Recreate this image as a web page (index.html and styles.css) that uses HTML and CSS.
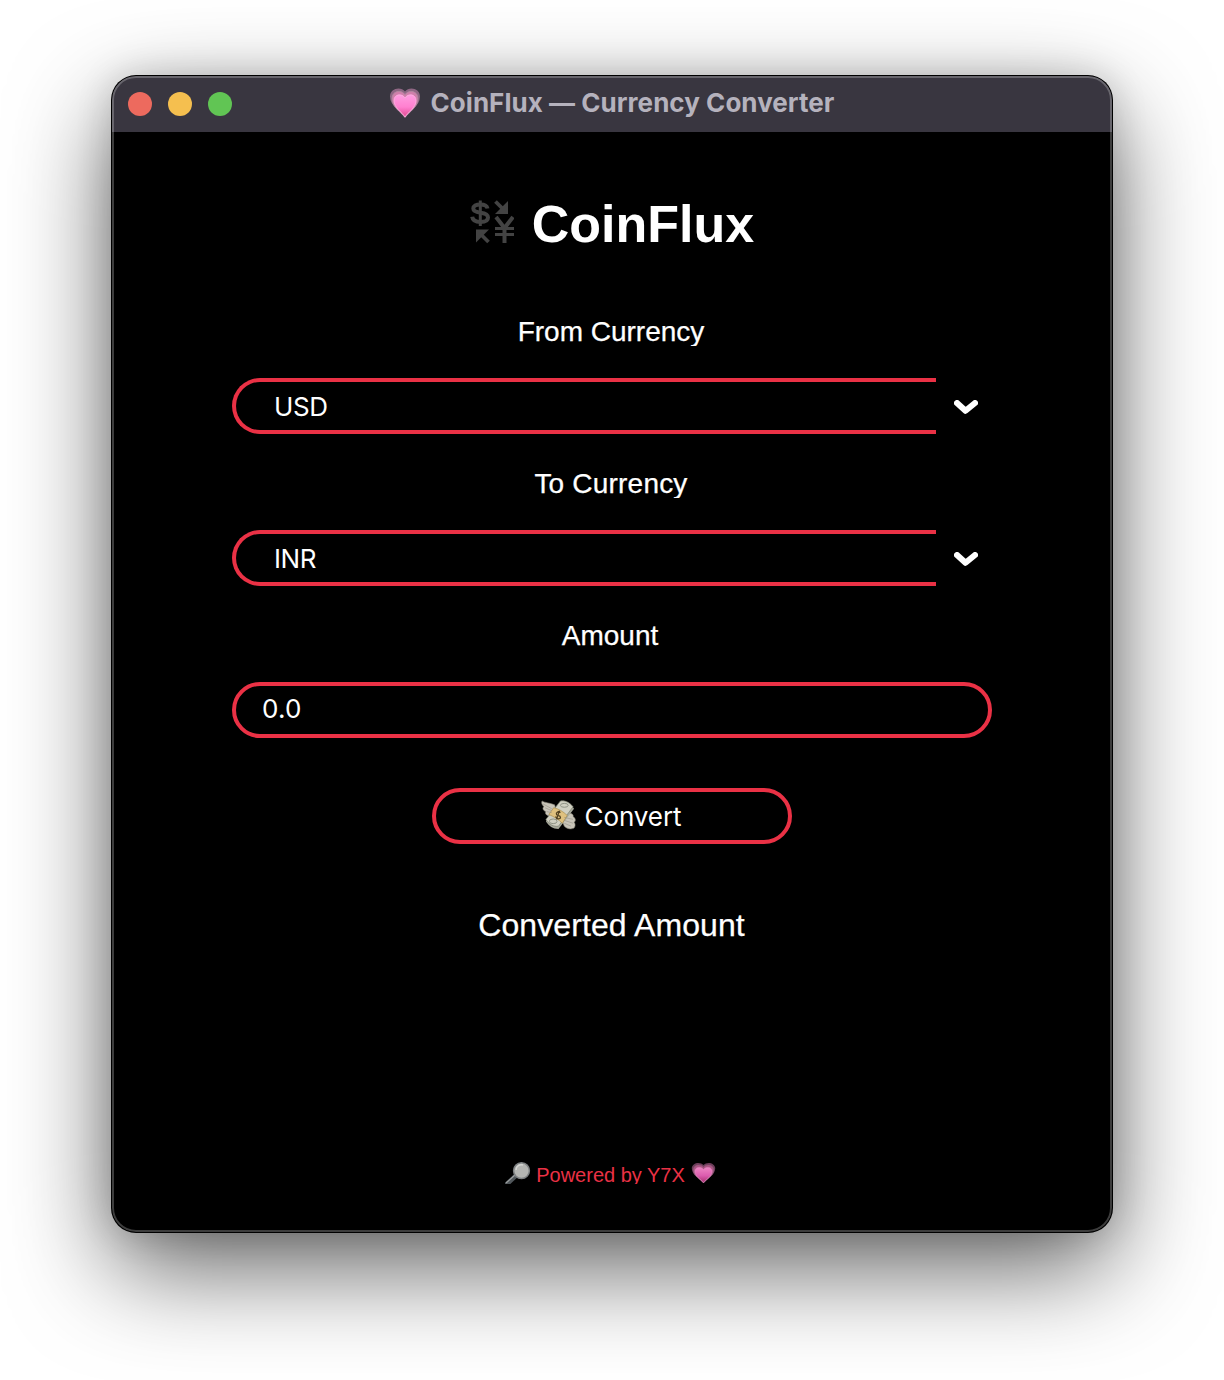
FILE: index.html
```html
<!DOCTYPE html>
<html lang="en">
<head>
<meta charset="utf-8">
<title>CoinFlux — Currency Converter</title>
<link rel="stylesheet" href="styles.css">
</head>
<body>
<svg class="defs" width="0" height="0" aria-hidden="true">
  <defs>
    <linearGradient id="pink" x1="0" y1="0" x2="0" y2="1"><stop offset="0" stop-color="#ff9de0"/><stop offset=".55" stop-color="#ff80d0"/><stop offset="1" stop-color="#e0488f"/></linearGradient>
    <linearGradient id="rose" x1="0" y1="0" x2="0" y2="1"><stop offset="0" stop-color="#ee85c4"/><stop offset=".55" stop-color="#dc5cae"/><stop offset="1" stop-color="#a92f70"/></linearGradient>
    <symbol id="heart" viewBox="0 0 32 32">
      <path d="M16 30.500C12 25 1 19 1 9.500C1 1 12 -1 16 4.500C20 -1 31 1 31 9.500C31 19 20 25 16 30.500Z" fill="#8f6784"/>
      <path d="M16 30.500C12 25 3 20 3 11.500C3 4 12 2 16 7.500C20 2 29 4 29 11.500C29 20 20 25 16 30.500Z" fill="#d07fab" stroke="#b08a9f" stroke-width=".8"/>
      <path d="M16 30C13 25 5 21 5 13.500C5 7 13 6 16 11C19 6 27 7 27 13.500C27 21 19 25 16 30Z" fill="url(#pink)" stroke="#ffb2e2" stroke-width=".8"/>
    </symbol>
    <symbol id="heart-dim" viewBox="0 0 32 32">
      <path d="M16 30.500C12 25 1 19 1 9.500C1 1 12 -1 16 4.500C20 -1 31 1 31 9.500C31 19 20 25 16 30.500Z" fill="#6d3c5a"/>
      <path d="M16 30.500C12 25 3 20 3 11.500C3 4 12 2 16 7.500C20 2 29 4 29 11.500C29 20 20 25 16 30.500Z" fill="#ab5283" stroke="#8e6079" stroke-width=".8"/>
      <path d="M16 30C13 25 5 21 5 13.500C5 7 13 6 16 11C19 6 27 7 27 13.500C27 21 19 25 16 30Z" fill="url(#rose)" stroke="#df92c1" stroke-width=".8"/>
    </symbol>
    <symbol id="chevron" viewBox="0 0 24 14"><path d="M3 3L11.500 10.800L21 3" fill="none" stroke="#fff" stroke-width="6" stroke-linecap="round" stroke-linejoin="round"/></symbol>
  </defs>
</svg>
<div class="window">
  <header class="titlebar">
    <div class="lights"><i class="light red"></i><i class="light yellow"></i><i class="light green"></i></div>
    <div class="title"><svg class="title-heart"><use href="#heart"/></svg><span>CoinFlux — Currency Converter</span></div>
  </header>
  <main class="content">
    <h1 class="brand">
      <svg class="exchange" viewBox="0 0 44 44" fill="none" stroke="#434343" stroke-width="3">
        <path d="M17.500 8.500C17 5.500 14.500 4.400 10.300 4.400C6 4.400 3.300 6 3.300 8.500C3.300 11.300 6 12.100 10.500 12.700C15.500 13.300 18 14.500 18 17.500C18 20.500 15 22 10.500 22C5.500 22 2.600 20.300 2.200 16.800" stroke-width="4"/>
        <path d="M10.300 .5V26" stroke-width="3"/>
        <path d="M25.500 1.500L34 10" stroke-width="3.800"/><path d="M38 1V14H25Z" fill="#434343" stroke="none"/>
        <path d="M26 17L34.500 28L43 17M34.500 27V43" stroke-width="4"/><path d="M25 28.500H44M25 34.500H44"/>
        <path d="M6 29.500H19L6 42.500Z" fill="#434343" stroke="none"/><path d="M10.500 34L18.500 42" stroke-width="3.800"/>
      </svg>
      <span>CoinFlux</span>
    </h1>
    <div class="label">From Currency</div>
    <div class="select"><div class="value">USD</div><svg class="arrow"><use href="#chevron"/></svg></div>
    <div class="label to">To Currency</div>
    <div class="select"><div class="value">INR</div><svg class="arrow"><use href="#chevron"/></svg></div>
    <div class="label amount">Amount</div>
    <div class="entry">0.0</div>
    <button class="convert">
      <svg class="money" viewBox="0 0 36 32">
        <g fill="#c8c4b8" stroke="#858276" stroke-width=".6"><path d="M1 1C4 3 10 3 14 5L16 12L11 17C7 17 3 14 5 12C2 11 1 8 3 7C1 5 0 3 1 1Z"/><path d="M34 29C30 31 26 29 24 27L21 20L27 14C31 13 34 15 33 17C36 19 36 22 34 23C36 25 35 28 34 29Z"/></g>
        <path d="M5 22L21 1C27 1 31 4 34 9L18 30C12 30 8 27 5 22Z" fill="#a7a99b"/>
        <path d="M5 20L20 1C25 0 30 3 33 7L18 27C13 28 8 25 5 20Z" fill="#d0d0c2" stroke="#777b6c" stroke-width=".7"/>
        <ellipse cx="24" cy="5.500" rx="4" ry="2" fill="none" stroke="#8e9385"/><ellipse cx="12.500" cy="22" rx="4" ry="2.400" fill="none" stroke="#8e9385"/>
        <path d="M13 8C18 9 23 12 27 16L22 24C18 20 13 17 8 15Z" fill="#dfc17f" stroke="#a08344" stroke-width=".6"/>
        <path d="M20 13C18 11 15 13 16 15C17 17 20 15 20 18C20 20 16 20 15 17M19 11L16 20" fill="none" stroke="#504020" stroke-width="1.300"/>
        <path d="M2 4L11 9M4 8L11 11M6 12L11 13M24 18L33 20M24 21L33 24M24 24L31 27" stroke="#918e83" stroke-width=".6"/>
      </svg>
      <span>Convert</span>
    </button>
    <div class="result">Converted Amount</div>
    <footer class="powered">
      <svg class="lens" viewBox="0 0 26 22"><path d="M1 23L11 13.500" stroke="#50565a" stroke-width="4.500"/><path d="M1 21L10 13" stroke="#9da1a2" stroke-width="1.200"/><circle cx="16.500" cy="8.700" r="7.900" fill="#b4b5b2" stroke="#7d8082" stroke-width="1.500"/><path d="M11 8C11 4 15 2 18 3" fill="none" stroke="#d4d5d2" stroke-width="1.500"/></svg>
      <span>Powered by Y7X</span>
      <svg class="foot-heart" viewBox="0 0 32 32" preserveAspectRatio="none"><use href="#heart-dim" width="32" height="32"/></svg>
    </footer>
  </main>
</div>
</body>
</html>
```
FILE: styles.css
```css
* { box-sizing: border-box; }
body { margin: 0; padding: 76px 112px 148px; background: #fff; font-family: "Liberation Sans", Arial, sans-serif; color: #fff; }
.defs { position: absolute; }
svg { display: block; flex: none; }
.window { position: relative; width: 1000px; height: 1156px; border-radius: 24px; background: #000; overflow: hidden; box-shadow: 0 0 0 1px #000, 0 36px 100px rgba(0,0,0,.62), 0 0 36px rgba(0,0,0,.16); }
.window::after { content: ""; position: absolute; inset: 0; border-radius: 24px; border: 2px solid rgba(255,255,255,.24); pointer-events: none; }
.titlebar { height: 56px; display: grid; grid-template-columns: 120px 1fr 120px; align-items: center; padding: 0 16px; background: #393640; }
.lights { display: flex; gap: 16px; }
.light { width: 24px; height: 24px; border-radius: 50%; }
.red { background: #ed6a5e; }
.yellow { background: #f5bf4f; }
.green { background: #61c554; }
.title { display: flex; justify-content: center; align-items: center; gap: 10px; font: 700 26px/54px Inter, sans-serif; color: #b5b2bd; height: 56px; padding: 0 1px 2px 0; letter-spacing: .04px; white-space: nowrap; }
.title-heart { width: 32px; height: 32px; }
.content { width: 760px; margin: 0 auto; padding-top: 62px; }
.brand { height: 60px; margin: 0 0 56px; display: flex; justify-content: center; align-items: center; gap: 18px; font-size: 52px; line-height: 60px; }
.exchange { width: 44px; height: 44px; margin-bottom: 4px; }
.label { height: 36px; margin-bottom: 32px; padding-right: 2px; overflow: hidden; text-align: center; font-size: 28px; line-height: 44px; -webkit-text-stroke: .25px #fff; }
.to { letter-spacing: .2px; }
.amount { padding-right: 4px; }
.select { height: 56px; display: flex; align-items: center; margin-bottom: 28px; }
.value { width: 704px; height: 56px; border: 4px solid #ea3145; border-right: 0; border-radius: 28px 0 0 28px; padding-left: 38px; font: 400 26px/50px Inter, sans-serif; letter-spacing: -.4px; }
.arrow { width: 24px; height: 14px; margin: 2px 0 0 18px; }
.entry { height: 56px; border: 4px solid #ea3145; border-radius: 28px; padding-left: 26px; font: 400 26px/46px Inter, sans-serif; letter-spacing: .2px; }
.convert { width: 360px; height: 56px; margin: 50px auto 0; padding: 1px 2px 0 0; display: flex; justify-content: center; align-items: center; gap: 9px; border: 4px solid #ea3145; border-radius: 28px; background: #000; color: #fff; font: 400 26px/48px Inter, sans-serif; letter-spacing: -.1px; }
.convert span { padding-top: 1px; }
.money { width: 35px; height: 31px; margin-bottom: 2px; }
.result { height: 40px; margin-top: 61px; padding-right: 1px; text-align: center; font-size: 32px; line-height: 40px; letter-spacing: .1px; -webkit-text-stroke: .25px #fff; }
.powered { height: 22px; margin-top: 217px; padding-right: 3px; overflow: hidden; display: flex; justify-content: center; gap: 5px; color: #ea3145; font-size: 20px; line-height: 27px; }
.lens { width: 26px; height: 22px; }
.foot-heart { width: 25px; height: 22px; margin-left: 1px; }
```
